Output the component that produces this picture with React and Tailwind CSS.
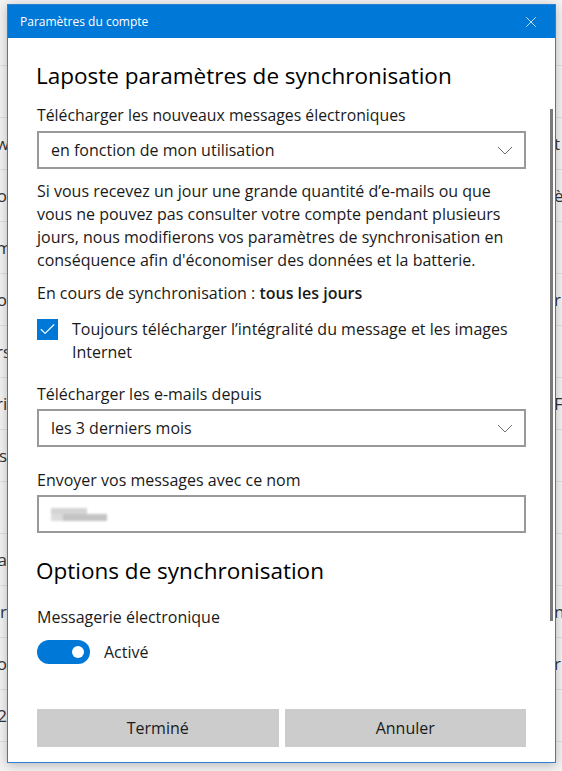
import { Check, X } from "lucide-react";

const bgRows = [
  { l: "", r: "" },
  { l: "", r: "" },
  { l: "w", r: "t" },
  { l: "o", r: "è" },
  { l: "m", r: "" },
  { l: "o", r: "r" },
  { l: "rs", r: "" },
  { l: "ri", r: "Fo" },
  { l: "s", r: "" },
  { l: "", r: "" },
  { l: "a", r: "" },
  { l: "r", r: "nt" },
  { l: "o", r: "r" },
  { l: "2", r: "" },
  { l: "", r: "" },
];

function Chevron() {
  return (
    <svg width="16" height="9" viewBox="0 0 16 9" fill="none">
      <path d="M1 1l7 7 7-7" stroke="#707070" strokeWidth="1" />
    </svg>
  );
}

function SelectBox({ value }) {
  return (
    <div className="flex h-[38px] items-center justify-between border-2 border-[#999999] pl-[12px] pr-[11px] text-[16px] text-[#1a1a1a]">
      <span>{value}</span>
      <Chevron />
    </div>
  );
}

export default function App() {
  return (
    <div
      className="relative h-[771px] w-[562px] overflow-hidden bg-[#f3f3f3]"
      style={{ fontFamily: '"Open Sans", "Noto Sans", sans-serif' }}
    >
      {/* list behind the dialog */}
      <div className="pt-[14px]">
        {bgRows.map((row, i) => (
          <div
            key={i}
            className="flex h-[52px] items-center justify-between border-b border-[#e0e0e0] text-[17px] text-[#333]"
          >
            <span className="-ml-[4px] w-[11px] overflow-hidden text-right">{row.l}</span>
            <span className="w-[8px] overflow-hidden whitespace-nowrap">{row.r}</span>
          </div>
        ))}
      </div>

      {/* dialog */}
      <div className="absolute left-[7px] top-[4px] flex h-[759px] w-[549px] flex-col border border-[#2f7fcf] bg-white shadow-[0_2px_10px_rgba(0,0,0,0.25)]">
        <div className="flex h-[33px] shrink-0 items-center justify-between bg-[#0078d7] pl-[12px] pr-[15px] text-[12px] text-white">
          <span>Paramètres du compte</span>
          <X size={18} strokeWidth={1} />
        </div>

        <div className="relative flex-1 pl-[29px] pr-[29px] text-[16px] text-[#1a1a1a]">
          <div className="absolute right-[2px] top-[71px] h-[512px] w-[3px] bg-[#7a7a7a]" />

          <h1 className="-ml-[1px] mt-[23px] text-[22.5px] leading-[30px] font-normal text-black">
            Laposte paramètres de synchronisation
          </h1>

          <div className="mt-[14px] text-[15.8px] leading-[20px]">
            Télécharger les nouveaux messages électroniques
          </div>
          <div className="mt-[6px]">
            <SelectBox value="en fonction de mon utilisation" />
          </div>

          <p className="mt-[11px] leading-[23px]">
            Si vous recevez un jour une grande quantité d’e-mails ou que vous ne
            pouvez pas consulter votre compte pendant plusieurs jours, nous
            modifierons vos paramètres de synchronisation en conséquence afin
            d'économiser des données et la batterie.
          </p>

          <div className="mt-[10px] leading-[22px]">
            En cours de synchronisation : <span className="font-semibold">tous les jours</span>
          </div>

          <div className="mt-[15px] flex gap-[14px]">
            <div className="flex h-[21px] w-[21px] shrink-0 items-center justify-center bg-[#0078d7]">
              <Check size={19} strokeWidth={1.4} color="white" />
            </div>
            <div className="-mt-[1px] leading-[23px]">
              Toujours télécharger l’intégralité du message et les images Internet
            </div>
          </div>

          <div className="mt-[19px] leading-[22px]">Télécharger les e-mails depuis</div>
          <div className="mt-[4px]">
            <SelectBox value="les 3 derniers mois" />
          </div>

          <div className="mt-[22px] leading-[22px]">Envoyer vos messages avec ce nom</div>
          <div className="mt-[4px] flex h-[38px] flex-col justify-center border-2 border-[#999999] pl-[12px]">
            <div className="flex flex-col blur-[1px]">
              <div className="h-[6px] w-[36px] bg-[#d4d4d4]" />
              <div className="flex">
                <div className="h-[7px] w-[12px] bg-[#dcdcdc]" />
                <div className="h-[7px] w-[44px] bg-[#c4c4c4]" />
              </div>
            </div>
          </div>

          <h2 className="-ml-[1px] mt-[23px] text-[22.5px] leading-[30px] font-normal text-black">
            Options de synchronisation
          </h2>

          <div className="mt-[20px] leading-[22px]">Messagerie électronique</div>
          <div className="mt-[12px] flex items-center gap-[14px]">
            <div className="flex h-[24px] w-[53px] items-center justify-end rounded-full bg-[#0078d7] pr-[6px]">
              <div className="h-[12px] w-[12px] rounded-full bg-white" />
            </div>
            <span>Activé</span>
          </div>

          <div className="mt-[45px] grid grid-cols-2 gap-[6px]">
            <button className="h-[38px] bg-[#cccccc] text-[16px] text-[#1a1a1a]">Terminé</button>
            <button className="h-[38px] bg-[#cccccc] text-[16px] text-[#1a1a1a]">Annuler</button>
          </div>
        </div>
      </div>
    </div>
  );
}
